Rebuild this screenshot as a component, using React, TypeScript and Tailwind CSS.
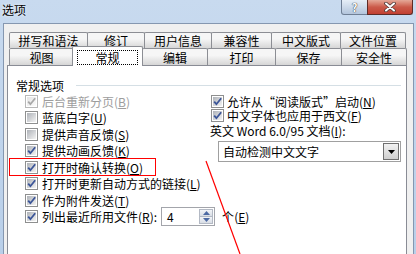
import type { ReactNode } from 'react'

const FONT = "font-['Noto_Sans_CJK_SC','Noto_Sans',sans-serif]"

function Box({ checked, disabled }: { checked?: boolean; disabled?: boolean }) {
  return (
    <span
      className={`relative flex h-[13px] w-[13px] shrink-0 items-center justify-center border bg-white ${
        disabled ? 'border-[#b8b8b8]' : 'border-[#8e8f8f]'
      }`}
    >
      <span
        className={`h-[9px] w-[9px] bg-gradient-to-br ${
          disabled ? 'from-[#e4e4e4] to-[#fbfbfb]' : 'from-[#aeb2b8] to-[#f4f4f4]'
        }`}
      />
      {checked && (
        <svg className="absolute left-0 top-0" width="11" height="11" viewBox="0 0 11 11">
          <path
            d="M2.2 5.6 L4.4 8.2 L9.2 2.2"
            fill="none"
            stroke={disabled ? '#a8a8a8' : '#3b5598'}
            strokeWidth="1.8"
          />
        </svg>
      )}
    </span>
  )
}

function Key({ k }: { k: string }) {
  return (
    <>
      (<span className="underline underline-offset-[1px]">{k}</span>)
    </>
  )
}

function Check({
  text,
  k,
  checked,
  disabled,
  gap = 'gap-[4px]',
  h = 'h-[16.5px]',
}: {
  text: ReactNode
  k: string
  checked?: boolean
  disabled?: boolean
  gap?: string
  h?: string
}) {
  return (
    <div className={`flex items-center ${h} ${gap}`}>
      <Box checked={checked} disabled={disabled} />
      <span className={`whitespace-nowrap leading-[13px] ${disabled ? 'text-[#9d9d9d]' : 'text-black'}`}>
        {text}
        <Key k={k} />
      </span>
    </div>
  )
}

function Tab({ label, w, first }: { label: string; w: string; first?: boolean }) {
  return (
    <div
      className={`flex h-full items-center justify-center rounded-t-[2px] border-x border-t border-[#8c8e94] bg-gradient-to-b from-[#f6f6f6] from-40% to-[#d6d6d6] leading-[13px] ${w} ${
        first ? '' : '-ml-px'
      }`}
    >
      {label}
    </div>
  )
}

const leftRows = [
  { t: '后台重新分页', k: 'B', checked: true, disabled: true },
  { t: '蓝底白字', k: 'U' },
  { t: '提供声音反馈', k: 'S' },
  { t: '提供动画反馈', k: 'K', checked: true },
  { t: '打开时确认转换', k: 'O', checked: true },
  { t: '打开时更新自动方式的链接', k: 'L', checked: true },
  { t: '作为附件发送', k: 'T', checked: true },
]

export default function App() {
  return (
    <div
      className={`relative h-[254px] w-[416px] overflow-hidden bg-gradient-to-b from-[#c8daef] to-[#b9cfe9] text-[12px] leading-none text-black ${FONT}`}
    >
      {/* title bar */}
      <div className="flex h-[23px] items-start">
        <div className="flex-1 pl-[2px] pt-[3px] leading-[13px] [text-shadow:0_0_3px_#ffffff]">选项</div>
        <div className="flex h-[15px] w-[27px] items-center justify-center rounded-bl-[3px] border border-t-0 border-[#6f7f95] bg-gradient-to-b from-[#e6eef7] to-[#b3c5dc] text-[11px] font-bold leading-[11px] text-white [text-shadow:0_0_1px_#333,0_0_1px_#333]">
          ?
        </div>
        <div className="mr-[3px] -ml-px flex h-[15px] w-[46px] items-center justify-center rounded-br-[3px] border border-t-0 border-[#5e2b26] bg-gradient-to-b from-[#e4a898] via-[#cb5a4a] to-[#c13f31]">
          <svg width="12" height="10" viewBox="0 0 12 10">
            <path d="M2 1.5 L10 8.5 M10 1.5 L2 8.5" stroke="#4b3a38" strokeWidth="3.6" strokeLinecap="round" />
            <path d="M2 1.5 L10 8.5 M10 1.5 L2 8.5" stroke="#ffffff" strokeWidth="2" strokeLinecap="round" />
          </svg>
        </div>
      </div>

      {/* dialog body */}
      <div className="ml-[3px] mr-[2px] h-[240px] border-x border-t border-[#8597b0] bg-[#f0f0f0] pl-[3px] pt-[8px]">
        {/* tab row 1 */}
        <div className="ml-[2px] flex h-[16px]">
          <Tab label="拼写和语法" w="w-[79px]" first />
          <Tab label="修订" w="w-[58px]" />
          <Tab label="用户信息" w="w-[68px]" />
          <Tab label="兼容性" w="w-[61px]" />
          <Tab label="中文版式" w="w-[70px]" />
          <Tab label="文件位置" w="w-[66px]" />
        </div>
        {/* tab row 2 */}
        <div className="ml-[2px] flex h-[17px] items-end">
          <Tab label="视图" w="w-[65px]" first />
          <div className="relative z-10 -mb-px -ml-[2px] flex h-[20px] w-[71px] items-end justify-center rounded-t-[2px] border-x border-t border-[#8c8e94] bg-white pb-[2px] leading-[13px]">
            常规
            <span className="absolute bottom-[1px] left-[4px] right-[4px] top-[3px] border border-dotted border-black" />
          </div>
          <Tab label="编辑" w="w-[66px]" />
          <Tab label="打印" w="w-[69px]" />
          <Tab label="保存" w="w-[67px]" />
          <Tab label="安全性" w="w-[66px]" />
        </div>

        {/* panel */}
        <div className="h-[200px] w-[400px] border border-[#898c95] bg-white">
          <div className="mt-[13px] flex h-[12px] items-center pl-[8px] pr-[5px]">
            <span className="leading-[13px]">常规选项</span>
            <span className="ml-[12px] h-px flex-1 bg-[#d5dfe5]" />
          </div>

          <div className="mt-[2px] flex">
            {/* left column */}
            <div className="w-[202px] pl-[17px]">
              {leftRows.map((r) => (
                <Check key={r.k} text={r.t} k={r.k} checked={r.checked} disabled={r.disabled} />
              ))}
              <div className="flex h-[16.5px] items-center gap-[4px]">
                <Box checked />
                <span className="w-[122px] whitespace-nowrap leading-[13px]">
                  列出最近所用文件<Key k="R" />:
                </span>
                <div className="flex h-[19px] w-[54px] shrink-0 items-stretch border border-[#a3a5ab] bg-white">
                  <span className="flex flex-1 items-center pl-[5px] leading-[13px]">4</span>
                  <div className="my-[1px] mr-[1px] flex w-[14px] flex-col">
                    <div className="flex flex-1 items-center justify-center border border-[#b3b9c4] bg-gradient-to-b from-[#f3f5f8] to-[#d8dde5]">
                      <svg width="7" height="4" viewBox="0 0 7 4">
                        <path d="M0 4 L3.5 0 L7 4 Z" fill="#4d6aa3" />
                      </svg>
                    </div>
                    <div className="-mt-px flex flex-1 items-center justify-center border border-[#b3b9c4] bg-gradient-to-b from-[#f3f5f8] to-[#d8dde5]">
                      <svg width="7" height="4" viewBox="0 0 7 4">
                        <path d="M0 0 L7 0 L3.5 4 Z" fill="#4d6aa3" />
                      </svg>
                    </div>
                  </div>
                </div>
                <span className="ml-[3px] whitespace-nowrap leading-[13px]">
                  个<Key k="E" />
                </span>
              </div>
            </div>

            {/* right column */}
            <div className="flex-1 pt-[1px]">
              <div className="ml-[1px]">
                <Check text="允许从“阅读版式”启动" k="N" checked gap="gap-[3px]" h="h-[14.5px]" />
                <Check text="中文字体也应用于西文" k="F" checked gap="gap-[3px]" h="h-[14.5px]" />
              </div>
              <div className="flex h-[14.5px] items-center whitespace-nowrap leading-[13px]">
                英文 Word 6.0/95 文档<Key k="I" />:
              </div>
              <div className="ml-[8px] mt-[3.5px] flex h-[21px] w-[183px] items-center border border-[#a0a0a0] bg-white pr-[1px]">
                <span className="flex-1 pl-[4px] leading-[13px]">自动检测中文文字</span>
                <div className="flex h-[17px] w-[16px] items-center justify-center border border-[#707070] bg-gradient-to-b from-[#f2f2f2] to-[#cfcfcf]">
                  <svg width="7" height="4" viewBox="0 0 7 4">
                    <path d="M0 0 L7 0 L3.5 4 Z" fill="#000000" />
                  </svg>
                </div>
              </div>
            </div>
          </div>
        </div>
      </div>

      {/* annotation overlays */}
      <div className="pointer-events-none absolute left-[9px] top-[158px] h-[18px] w-[147px] border border-[#ff0000]" />
      <svg className="pointer-events-none absolute left-0 top-0" width="416" height="254">
        <line x1="206" y1="161" x2="240" y2="254" stroke="#ff0000" strokeWidth="1.2" />
      </svg>
    </div>
  )
}
